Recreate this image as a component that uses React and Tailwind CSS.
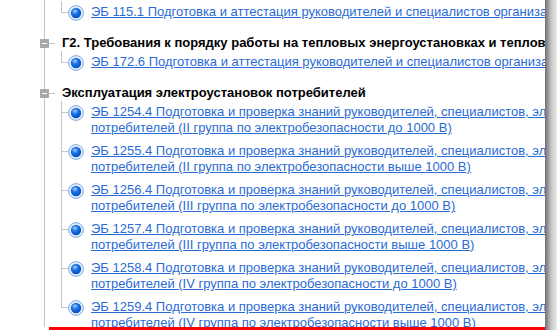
import React from "react";

const groups = [
  {
    title: "Б1. Требования промышленной безопасности в нефтяной и газовой промышленности",
    items: [["ЭБ 115.1 Подготовка и аттестация руководителей и специалистов организаций, осуществляющих деятельность"]],
  },
  {
    title: "Г2. Требования к порядку работы на тепловых энергоустановках и тепловых сетях",
    items: [["ЭБ 172.6 Подготовка и аттестация руководителей и специалистов организаций, эксплуатирующих тепловые энергоустановки"]],
  },
  {
    title: "Эксплуатация электроустановок потребителей",
    items: [
      ["ЭБ 1254.4 Подготовка и проверка знаний руководителей, специалистов, электротехнического персонала организаций", "потребителей (II группа по электробезопасности до 1000 В)"],
      ["ЭБ 1255.4 Подготовка и проверка знаний руководителей, специалистов, электротехнического персонала организаций", "потребителей (II группа по электробезопасности выше 1000 В)"],
      ["ЭБ 1256.4 Подготовка и проверка знаний руководителей, специалистов, электротехнического персонала организаций", "потребителей (III группа по электробезопасности до 1000 В)"],
      ["ЭБ 1257.4 Подготовка и проверка знаний руководителей, специалистов, электротехнического персонала организаций", "потребителей (III группа по электробезопасности выше 1000 В)"],
      ["ЭБ 1258.4 Подготовка и проверка знаний руководителей, специалистов, электротехнического персонала организаций", "потребителей (IV группа по электробезопасности до 1000 В)"],
      ["ЭБ 1259.4 Подготовка и проверка знаний руководителей, специалистов, электротехнического персонала организаций", "потребителей (IV группа по электробезопасности выше 1000 В)"],
    ],
  },
];

function Radio() {
  return (
    <svg width="16" height="16" viewBox="0 0 16 16" className="shrink-0">
      <defs>
        <radialGradient id="rring" cx="0.5" cy="0.5" r="0.5">
          <stop offset="0.6" stopColor="#ffffff" />
          <stop offset="1" stopColor="#cfe1f7" />
        </radialGradient>
        <radialGradient id="rdot" cx="0.4" cy="0.35" r="0.7">
          <stop offset="0" stopColor="#5aa6f7" />
          <stop offset="0.55" stopColor="#0f66dc" />
          <stop offset="1" stopColor="#0c4cb3" />
        </radialGradient>
      </defs>
      <circle cx="8" cy="8" r="7.4" fill="url(#rring)" stroke="#84aee2" strokeWidth="1" />
      <circle cx="8" cy="8" r="5.2" fill="url(#rdot)" />
      <ellipse cx="7" cy="6" rx="2.4" ry="1.5" fill="#9ccaf9" opacity="0.6" />
    </svg>
  );
}

function Item({ lines, last }) {
  return (
    <div className="flex">
      <div className="flex w-[7px] shrink-0 flex-col">
        <div className="h-[12px] border-b border-l border-[#c4c4c4]" />
        {!last && <div className="flex-1 border-l border-[#c4c4c4]" />}
      </div>
      <div className="flex pt-[3px] pb-[4px]">
        <div className="pt-[1px]">
          <Radio />
        </div>
        <a href="#" className="ml-[7px] whitespace-nowrap text-[13px] leading-[16px] text-[#2a6bd6] underline">
          {lines.map((l, i) => (
            <div key={i}>{l}</div>
          ))}
        </a>
      </div>
    </div>
  );
}

export default function App() {
  return (
    <div className="flex h-[330px] w-[557px] overflow-hidden bg-white" style={{ fontFamily: "'Liberation Sans', Arial, sans-serif" }}>
      <div className="flex w-[545px] shrink-0 flex-col overflow-hidden">
        <div className="min-h-0 flex-1 overflow-hidden">
          <div className="ml-[44px] mt-[-15px] border-l border-[#c4c4c4]">
            {groups.map((g, gi) => (
              <div key={gi} className={gi > 0 ? "mt-[10px]" : ""}>
                <div className="flex h-[16px] items-center">
                  <div className="ml-[-5px] flex h-[9px] w-[9px] shrink-0 items-center justify-center bg-[#a9a9a9]">
                    <div className="h-[1px] w-[5px] bg-white" />
                  </div>
                  <div className="h-px w-[6px] shrink-0 bg-[#c4c4c4]" />
                  <div className="ml-[7px] whitespace-nowrap text-[13px] font-bold leading-[16px] text-black">{g.title}</div>
                </div>
                <div className="ml-[16px]">
                  {g.items.map((it, ii) => (
                    <Item key={ii} lines={it} last={ii === g.items.length - 1} />
                  ))}
                </div>
              </div>
            ))}
          </div>
        </div>
        <div className="ml-[49px] h-[3px] shrink-0 bg-[#ff0000]" />
      </div>
      <div className="w-[12px] shrink-0 bg-gradient-to-r from-[#6e6e6e] via-[#c4c4c4] to-[#ececec]" />
    </div>
  );
}
